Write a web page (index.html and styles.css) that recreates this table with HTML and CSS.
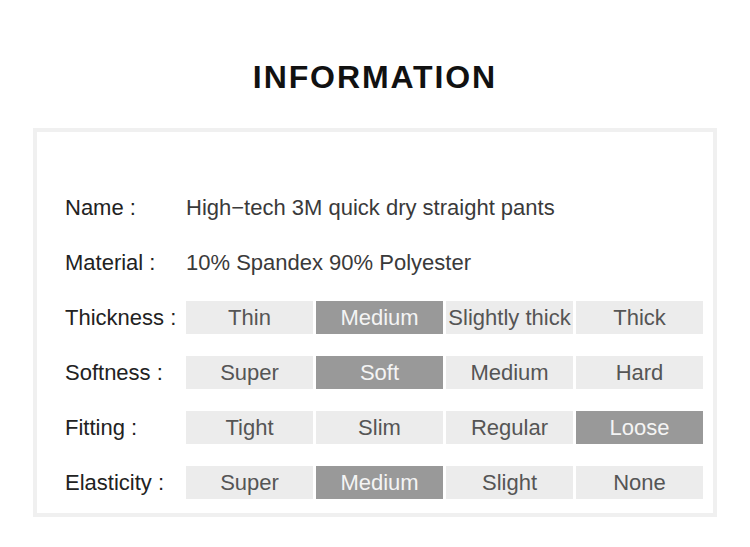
FILE: index.html
```
<!DOCTYPE html>
<html>
<head>
<meta charset="utf-8">
<link rel="stylesheet" href="styles.css">
</head>
<body>
<div class="page">
  <h1 class="title">INFORMATION</h1>
  <div class="box">
    <div class="row">
      <div class="label">Name :</div>
      <div class="value">High−tech 3M quick dry straight pants</div>
    </div>
    <div class="row">
      <div class="label">Material :</div>
      <div class="value">10% Spandex 90% Polyester</div>
    </div>
    <div class="row">
      <div class="label">Thickness :</div>
      <div class="cells">
        <div class="cell">Thin</div>
        <div class="cell on">Medium</div>
        <div class="cell">Slightly thick</div>
        <div class="cell">Thick</div>
      </div>
    </div>
    <div class="row">
      <div class="label">Softness :</div>
      <div class="cells">
        <div class="cell">Super</div>
        <div class="cell on">Soft</div>
        <div class="cell">Medium</div>
        <div class="cell">Hard</div>
      </div>
    </div>
    <div class="row">
      <div class="label">Fitting :</div>
      <div class="cells">
        <div class="cell">Tight</div>
        <div class="cell">Slim</div>
        <div class="cell">Regular</div>
        <div class="cell on">Loose</div>
      </div>
    </div>
    <div class="row">
      <div class="label">Elasticity :</div>
      <div class="cells">
        <div class="cell">Super</div>
        <div class="cell on">Medium</div>
        <div class="cell">Slight</div>
        <div class="cell">None</div>
      </div>
    </div>
  </div>
</div>
</body>
</html>
```
FILE: styles.css
```
html, body {
  margin: 0;
  padding: 0;
  background: #ffffff;
}
.page {
  width: 750px;
  height: 547px;
  font-family: "Liberation Sans", Arial, sans-serif;
  padding-top: 58px;
  box-sizing: border-box;
}
.title {
  margin: 0;
  text-align: center;
  font-size: 32px;
  line-height: 38px;
  font-weight: bold;
  letter-spacing: 1.9px;
  color: #111;
}
.box {
  margin: 32px 0 0 33px;
  width: 684px;
  box-sizing: border-box;
  border: 4px solid #f0f0f0;
  padding: 59px 0 14px 28px;
  display: flex;
  flex-direction: column;
  gap: 22px;
}
.row {
  display: flex;
  align-items: center;
  height: 33px;
}
.label {
  width: 121px;
  font-size: 22px;
  color: #222;
}
.value {
  font-size: 22px;
  color: #3a3a3a;
}
.cells {
  display: grid;
  grid-template-columns: repeat(4, 127px);
  column-gap: 3px;
  height: 33px;
}
.cell {
  background: #ececec;
  color: #555;
  font-size: 22px;
  display: flex;
  align-items: center;
  justify-content: center;
}
.cell.on {
  background: #999999;
  color: #f4f4f4;
}
```
